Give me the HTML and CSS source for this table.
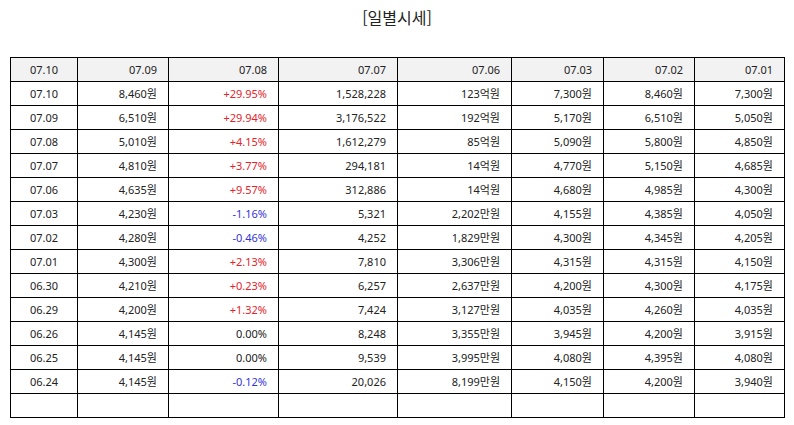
FILE: index.html
```html
<!DOCTYPE html>
<html lang="ko">
<head>
<meta charset="utf-8">
<link rel="stylesheet" href="styles.css">
</head>
<body>
<div class="wrap">
  <h1 class="title">[일별시세]</h1>
  <table class="grid">
    <colgroup>
      <col class="c1"><col class="c2"><col class="c3"><col class="c4"><col class="c5"><col class="c6"><col class="c7"><col class="c8">
    </colgroup>
    <thead>
      <tr class="head">
        <td class="ctr">07.10</td><td>07.09</td><td>07.08</td><td>07.07</td><td>07.06</td><td>07.03</td><td>07.02</td><td>07.01</td>
      </tr>
    </thead>
    <tbody>
      <tr><td class="ctr">07.10</td><td>8,460원</td><td class="up">+29.95%</td><td>1,528,228</td><td>123억원</td><td>7,300원</td><td>8,460원</td><td>7,300원</td></tr>
      <tr><td class="ctr">07.09</td><td>6,510원</td><td class="up">+29.94%</td><td>3,176,522</td><td>192억원</td><td>5,170원</td><td>6,510원</td><td>5,050원</td></tr>
      <tr><td class="ctr">07.08</td><td>5,010원</td><td class="up">+4.15%</td><td>1,612,279</td><td>85억원</td><td>5,090원</td><td>5,800원</td><td>4,850원</td></tr>
      <tr><td class="ctr">07.07</td><td>4,810원</td><td class="up">+3.77%</td><td>294,181</td><td>14억원</td><td>4,770원</td><td>5,150원</td><td>4,685원</td></tr>
      <tr><td class="ctr">07.06</td><td>4,635원</td><td class="up">+9.57%</td><td>312,886</td><td>14억원</td><td>4,680원</td><td>4,985원</td><td>4,300원</td></tr>
      <tr><td class="ctr">07.03</td><td>4,230원</td><td class="down">-1.16%</td><td>5,321</td><td>2,202만원</td><td>4,155원</td><td>4,385원</td><td>4,050원</td></tr>
      <tr><td class="ctr">07.02</td><td>4,280원</td><td class="down">-0.46%</td><td>4,252</td><td>1,829만원</td><td>4,300원</td><td>4,345원</td><td>4,205원</td></tr>
      <tr><td class="ctr">07.01</td><td>4,300원</td><td class="up">+2.13%</td><td>7,810</td><td>3,306만원</td><td>4,315원</td><td>4,315원</td><td>4,150원</td></tr>
      <tr><td class="ctr">06.30</td><td>4,210원</td><td class="up">+0.23%</td><td>6,257</td><td>2,637만원</td><td>4,200원</td><td>4,300원</td><td>4,175원</td></tr>
      <tr><td class="ctr">06.29</td><td>4,200원</td><td class="up">+1.32%</td><td>7,424</td><td>3,127만원</td><td>4,035원</td><td>4,260원</td><td>4,035원</td></tr>
      <tr><td class="ctr">06.26</td><td>4,145원</td><td>0.00%</td><td>8,248</td><td>3,355만원</td><td>3,945원</td><td>4,200원</td><td>3,915원</td></tr>
      <tr><td class="ctr">06.25</td><td>4,145원</td><td>0.00%</td><td>9,539</td><td>3,995만원</td><td>4,080원</td><td>4,395원</td><td>4,080원</td></tr>
      <tr><td class="ctr">06.24</td><td>4,145원</td><td class="down">-0.12%</td><td>20,026</td><td>8,199만원</td><td>4,150원</td><td>4,200원</td><td>3,940원</td></tr>
      <tr class="empty"><td></td><td></td><td></td><td></td><td></td><td></td><td></td><td></td></tr>
    </tbody>
  </table>
</div>
</body>
</html>
```

FILE: styles.css
```css
html, body {
  margin: 0;
  padding: 0;
  background: #ffffff;
}
body {
  font-family: "Noto Sans", "Noto Sans CJK KR", sans-serif;
  color: #222222;
}
.wrap {
  padding: 0 10px;
}
.title {
  margin: 0;
  padding-top: 6px;
  height: 57px;
  box-sizing: border-box;
  text-align: center;
  font-size: 16px;
  font-weight: normal;
  line-height: 22px;
  color: #222222;
  font-family: "Noto Sans CJK KR", sans-serif;
}
.grid {
  width: 774px;
  border-collapse: collapse;
  table-layout: fixed;
  font-size: 11px;
}
.c1 { width: 67px; }
.c2 { width: 91px; }
.c3 { width: 110px; }
.c4 { width: 119px; }
.c5 { width: 114px; }
.c6 { width: 92px; }
.c7 { width: 91px; }
.c8 { width: 90px; }
.grid td {
  border: 1px solid #000000;
  height: 24px;
  padding: 0 11px 0 4px;
  text-align: right;
  white-space: nowrap;
  box-sizing: border-box;
  line-height: 14px;
}
.grid td.ctr {
  text-align: center;
  padding: 0 2px;
}
.head td {
  background: #f2f2f2;
}
.up { color: #e3242b; }
.down { color: #3535d6; }
```
